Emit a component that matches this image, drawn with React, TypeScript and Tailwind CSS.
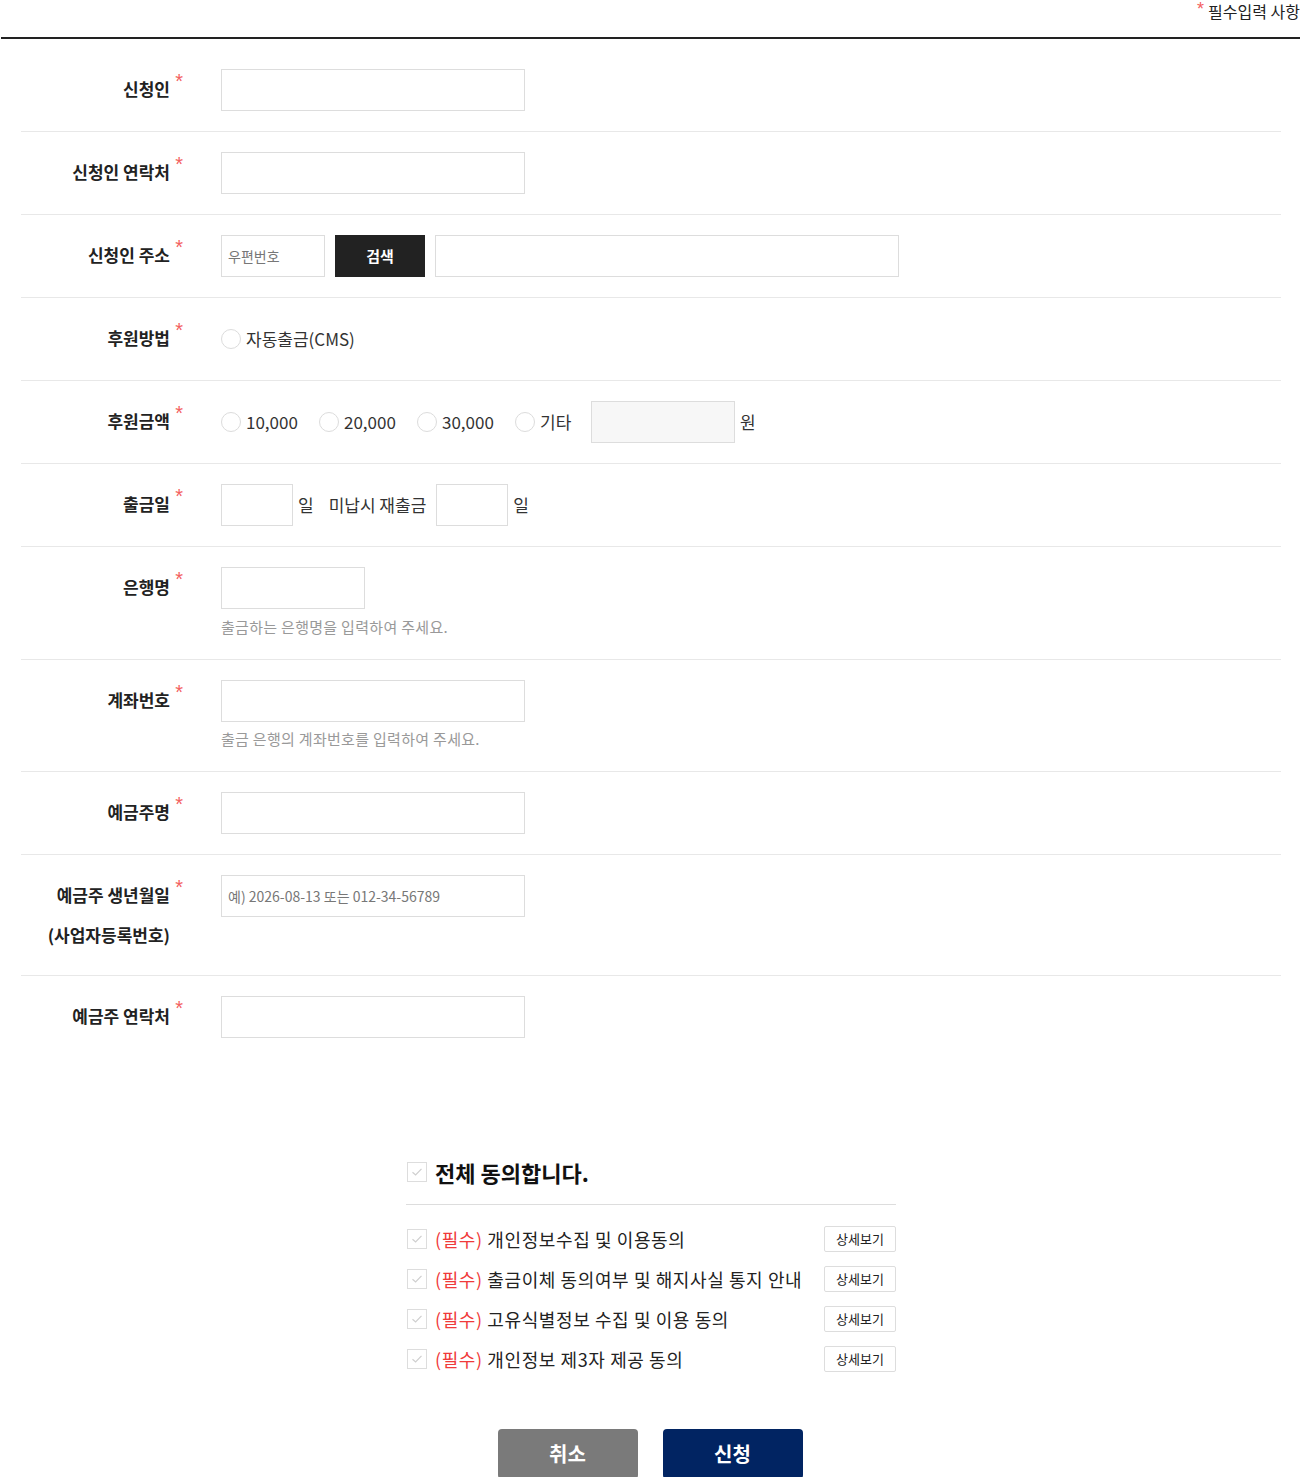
import type { ReactNode } from "react";

const FONT = "font-['Noto_Sans_CJK_KR','Noto_Sans',sans-serif]";

function Label({ children, sub }: { children: ReactNode; sub?: string }) {
  return (
    <div className="w-[180px] shrink-0 pr-[31px] text-right text-[17px] font-bold leading-[40px] text-[#222]">
      <span className="relative">
        {children}
        <span className="absolute -right-[13px] -top-[5px] font-['Liberation_Sans',sans-serif] text-[20px] font-normal leading-none text-[#f36060]">*</span>
      </span>
      {sub && <div>{sub}</div>}
    </div>
  );
}

function Row({ label, sub, children, last }: { label: string; sub?: string; children: ReactNode; last?: boolean }) {
  return (
    <div className={`flex py-[20px] ${last ? "" : "border-b border-[#e8e8e8]"}`}>
      <Label sub={sub}>{label}</Label>
      <div className="flex-1 pl-[20px]">{children}</div>
    </div>
  );
}

function Input({ w, placeholder, gray }: { w: string; placeholder?: string; gray?: boolean }) {
  return (
    <input
      className={`${w} block h-[42px] border border-[#ddd] px-[6px] text-[14px] text-[#333] outline-none placeholder:text-[#777] ${gray ? "bg-[#f7f7f7]" : "bg-white"}`}
      placeholder={placeholder}
    />
  );
}

function Radio({ label }: { label: string }) {
  return (
    <label className="flex items-center gap-[5px] text-[17px] text-[#333]">
      <span className="h-[20px] w-[20px] rounded-full border border-[#dcdcdc] bg-white" />
      {label}
    </label>
  );
}

function Check() {
  return (
    <span className="ml-px flex h-[20px] w-[20px] shrink-0 items-center justify-center border border-[#ddd] bg-white">
      <svg width="12" height="10" viewBox="0 0 12 10" fill="none">
        <path d="M1.5 5.2 4.6 8 10.5 1.8" stroke="#cfcfcf" strokeWidth="1.2" />
      </svg>
    </span>
  );
}

const agreements = [
  "개인정보수집 및 이용동의",
  "출금이체 동의여부 및 해지사실 통지 안내",
  "고유식별정보 수집 및 이용 동의",
  "개인정보 제3자 제공 동의",
];

export default function App() {
  return (
    <div className={`w-[1300px] bg-white pb-[40px] ${FONT}`}>
      {/* header */}
      <div className="ml-px flex h-[39px] justify-end border-b-2 border-[#222] pt-[1px]">
        <span className="relative text-[16px] leading-[20px] text-[#222]">
          <span className="absolute -left-[11px] -top-[1px] font-['Liberation_Sans',sans-serif] text-[18px] leading-none text-[#f36060]">*</span>
          필수입력 사항
        </span>
      </div>

      {/* form */}
      <div className="ml-[21px] w-[1260px] pt-[10px]">
        <Row label="신청인">
          <Input w="w-[304px]" />
        </Row>
        <Row label="신청인 연락처">
          <Input w="w-[304px]" />
        </Row>
        <Row label="신청인 주소">
          <div className="flex gap-[10px]">
            <Input w="w-[104px]" placeholder="우편번호" />
            <button className="h-[42px] w-[90px] bg-[#222] text-[15px] font-bold text-white">검색</button>
            <Input w="w-[464px]" />
          </div>
        </Row>
        <Row label="후원방법">
          <div className="flex h-[42px] items-center">
            <Radio label="자동출금(CMS)" />
          </div>
        </Row>
        <Row label="후원금액">
          <div className="flex h-[42px] items-center">
            <div className="w-[98px]"><Radio label="10,000" /></div>
            <div className="w-[98px]"><Radio label="20,000" /></div>
            <div className="w-[98px]"><Radio label="30,000" /></div>
            <div className="w-[76px]"><Radio label="기타" /></div>
            <Input w="w-[144px]" gray />
            <span className="ml-[5px] text-[17px] text-[#333]">원</span>
          </div>
        </Row>
        <Row label="출금일">
          <div className="flex h-[42px] items-center text-[17px] text-[#333]">
            <Input w="w-[72px]" />
            <span className="ml-[5px]">일</span>
            <span className="ml-[15px] mr-[10px]">미납시 재출금</span>
            <Input w="w-[72px]" />
            <span className="ml-[5px]">일</span>
          </div>
        </Row>
        <Row label="은행명">
          <Input w="w-[144px]" />
          <p className="mt-[6px] text-[15px] leading-[24px] tracking-[0.3px] text-[#999]">출금하는 은행명을 입력하여 주세요.</p>
        </Row>
        <Row label="계좌번호">
          <Input w="w-[304px]" />
          <p className="mt-[5px] text-[15px] leading-[24px] tracking-[0.3px] text-[#999]">출금 은행의 계좌번호를 입력하여 주세요.</p>
        </Row>
        <Row label="예금주명">
          <Input w="w-[304px]" />
        </Row>
        <Row label="예금주 생년월일" sub="(사업자등록번호)">
          <Input w="w-[304px]" placeholder="예) 2026-08-13 또는 012-34-56789" />
        </Row>
        <Row label="예금주 연락처" last>
          <Input w="w-[304px]" />
        </Row>
      </div>

      {/* agreements */}
      <div className="ml-[406px] mt-[101px] w-[490px]">
        <div className="flex h-[26px] items-center gap-[8px]">
          <Check />
          <span className="text-[22px] font-bold text-[#111]">전체 동의합니다.</span>
        </div>
        <div className="h-[20px] border-b border-[#ddd]" />
        <ul className="pt-[14px]">
          {agreements.map((a) => (
            <li key={a} className="flex h-[40px] items-center">
              <Check />
              <span className="ml-[8px] flex-1 text-[18px] tracking-[0.6px] text-[#222]">
                <span className="text-[#f03a3a]">(필수)</span> {a}
              </span>
              <button className="h-[26px] w-[72px] rounded-[2px] border border-[#ddd] bg-white text-[13px] text-[#222]">
                상세보기
              </button>
            </li>
          ))}
        </ul>
      </div>

      {/* buttons */}
      <div className="mt-[50px] flex justify-center gap-[25px]">
        <button className="h-[50px] w-[140px] rounded-[4px] bg-[#7a7a7a] text-[20px] font-bold text-white">취소</button>
        <button className="h-[50px] w-[140px] rounded-[4px] bg-[#012462] text-[20px] font-bold text-white">신청</button>
      </div>
    </div>
  );
}
